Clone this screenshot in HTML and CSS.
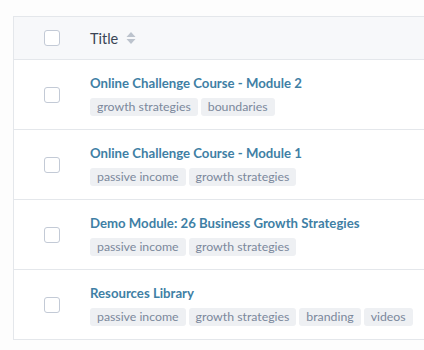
FILE: index.html
```html
<!DOCTYPE html>
<html lang="en">
<head>
    <meta charset="UTF-8">
    <meta name="viewport" content="width=device-width, initial-scale=1.0">
    <title>Modules</title>
    <link rel="stylesheet" href="styles.css">
</head>
<body>
    <div class="table-wrap">
        <div class="row head">
            <div class="check-cell"><span class="box"></span></div>
            <div class="title-cell">
                Title
                <svg class="sort" width="10" height="14" viewBox="0 0 10 14">
                    <path d="M5 1 L9.5 6 L0.5 6 Z" fill="#bcc3cd"/>
                    <path d="M5 13 L9.5 8 L0.5 8 Z" fill="#bcc3cd"/>
                </svg>
            </div>
        </div>
        <div class="row">
            <div class="check-cell"><span class="box"></span></div>
            <div class="title-cell">
                <a class="name">Online Challenge Course - Module 2</a>
                <div class="tags">
                    <span class="tag">growth strategies</span>
                    <span class="tag">boundaries</span>
                </div>
            </div>
        </div>
        <div class="row">
            <div class="check-cell"><span class="box"></span></div>
            <div class="title-cell">
                <a class="name">Online Challenge Course - Module 1</a>
                <div class="tags">
                    <span class="tag">passive income</span>
                    <span class="tag">growth strategies</span>
                </div>
            </div>
        </div>
        <div class="row">
            <div class="check-cell"><span class="box"></span></div>
            <div class="title-cell">
                <a class="name">Demo Module: 26 Business Growth Strategies</a>
                <div class="tags">
                    <span class="tag">passive income</span>
                    <span class="tag">growth strategies</span>
                </div>
            </div>
        </div>
        <div class="row">
            <div class="check-cell"><span class="box"></span></div>
            <div class="title-cell">
                <a class="name">Resources Library</a>
                <div class="tags">
                    <span class="tag">passive income</span>
                    <span class="tag">growth strategies</span>
                    <span class="tag">branding</span>
                    <span class="tag">videos</span>
                </div>
            </div>
        </div>
    </div>
</body>
</html>
```

FILE: styles.css
```css
body {
    margin: 0;
    background-color: #fdfdfd;
    font-family: "Source Sans Pro", Lato, "Liberation Sans", sans-serif;
    overflow: hidden;
}
.table-wrap {
    margin: 16px 0 0 13px;
    width: 430px;
    border-top: 1px solid #e4e7eb;
    border-left: 1px solid #e4e7eb;
    background-color: #fff;
}
.row {
    display: flex;
    align-items: center;
    height: 69px;
    border-bottom: 1px solid #e4e7eb;
}
.row.head {
    height: 42px;
    background-color: #f7f8fa;
}
.check-cell {
    width: 76px;
    display: flex;
    justify-content: center;
}
.box {
    width: 14px;
    height: 14px;
    border: 1px solid #c3cad6;
    border-radius: 3px;
    background-color: #fff;
}
.title-cell {
    display: flex;
    flex-direction: column;
    gap: 7px;
    padding-top: 2px;
}
.head .title-cell {
    flex-direction: row;
    align-items: center;
    gap: 8px;
    padding-top: 0;
    font-size: 14.5px;
    color: #3a4556;
}
.name {
    font-size: 13.2px;
    font-weight: bold;
    color: #3f7fa5;
}
.tags {
    display: flex;
    gap: 3px;
}
.tag {
    font-size: 12.3px;
    line-height: 18px;
    padding: 0 7px;
    border-radius: 3px;
    background-color: #eef0f3;
    color: #7b889c;
}
```
